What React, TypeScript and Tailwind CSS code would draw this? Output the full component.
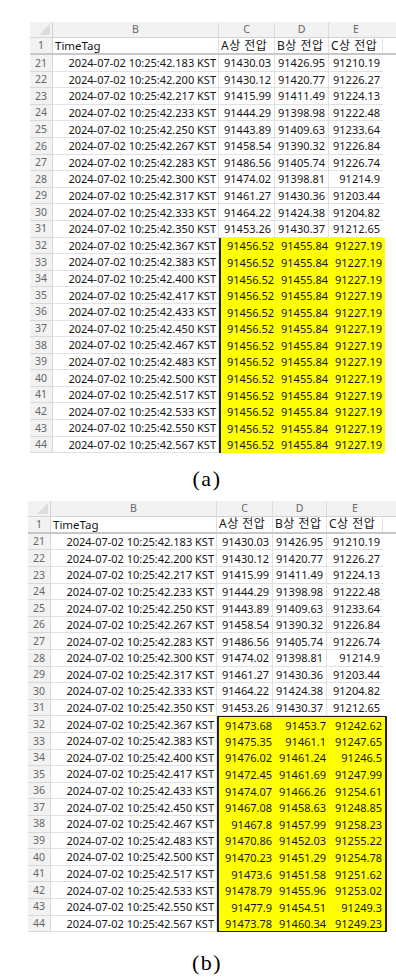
import React from "react";

type Row = { n: number; t: string; a: string; b: string; c: string; hl?: boolean };

const ms = [
  "183", "200", "217", "233", "250", "267", "283", "300", "317", "333", "350", "367",
  "383", "400", "417", "433", "450", "467", "483", "500", "517", "533", "550", "567",
];

const common: string[][] = [
  ["91430.03", "91426.95", "91210.19"],
  ["91430.12", "91420.77", "91226.27"],
  ["91415.99", "91411.49", "91224.13"],
  ["91444.29", "91398.98", "91222.48"],
  ["91443.89", "91409.63", "91233.64"],
  ["91458.54", "91390.32", "91226.84"],
  ["91486.56", "91405.74", "91226.74"],
  ["91474.02", "91398.81", "91214.9"],
  ["91461.27", "91430.36", "91203.44"],
  ["91464.22", "91424.38", "91204.82"],
  ["91453.26", "91430.37", "91212.65"],
];

const tailB: string[][] = [
  ["91473.68", "91453.7", "91242.62"],
  ["91475.35", "91461.1", "91247.65"],
  ["91476.02", "91461.24", "91246.5"],
  ["91472.45", "91461.69", "91247.99"],
  ["91474.07", "91466.26", "91254.61"],
  ["91467.08", "91458.63", "91248.85"],
  ["91467.8", "91457.99", "91258.23"],
  ["91470.86", "91452.03", "91255.22"],
  ["91470.23", "91451.29", "91254.78"],
  ["91473.6", "91451.58", "91251.62"],
  ["91478.79", "91455.96", "91253.02"],
  ["91477.9", "91454.51", "91249.3"],
  ["91473.78", "91460.34", "91249.23"],
];

const build = (tail: string[][]): Row[] =>
  ms.map((m, i) => {
    const v = i < 11 ? common[i] : tail[i - 11];
    return { n: 21 + i, t: `2024-07-02 10:25:42.${m} KST`, a: v[0], b: v[1], c: v[2], hl: i >= 11 };
  });

const rowsA = build(Array.from({ length: 13 }, () => ["91456.52", "91455.84", "91227.19"]));
const rowsB = build(tailB);

type Widths = { num: string; b: string; c: string; d: string; e: string };

const wA: Widths = { num: "w-[23px]", b: "w-[166px]", c: "w-[56px]", d: "w-[54px]", e: "w-[54px]" };
const wB: Widths = { num: "w-[23px]", b: "w-[166px]", c: "w-[56px]", d: "w-[54px]", e: "w-[56px]" };

const cell = "h-full border-r border-[#e1e1e1] flex items-center";

function Sheet({ rows, w, boxed }: { rows: Row[]; w: Widths; boxed: boolean }) {
  const last = rows.length - 1;
  return (
    <div className="flex flex-col text-[11px] leading-none text-[#161616] font-['Noto_Sans','Noto_Sans_CJK_KR',sans-serif]">
      {/* column letters */}
      <div className="flex h-[16px] bg-[#f2f2f2] border-b border-[#d4d4d4] text-[#666] text-[10.5px]">
        <div className={`${w.num} h-full border-r border-[#d4d4d4] relative overflow-hidden`}>
          <div className="absolute right-[2px] bottom-[2px] w-0 h-0 border-l-[11px] border-l-transparent border-b-[11px] border-b-[#dcdcdc]" />
        </div>
        <div className={`${w.b} h-full border-r border-[#dedede] flex items-center justify-center`}>B</div>
        <div className={`${w.c} h-full border-r border-[#dedede] flex items-center justify-center`}>C</div>
        <div className={`${w.d} h-full border-r border-[#dedede] flex items-center justify-center`}>D</div>
        <div className={`${w.e} h-full flex items-center justify-center`}>E</div>
      </div>
      {/* header row 1 */}
      <div className="flex h-[17px] border-b-2 border-[#c8c8c8]">
        <div className={`${w.num} h-full bg-[#f2f2f2] border-r border-[#d4d4d4] flex items-center justify-center text-[#666] text-[10.5px]`}>1</div>
        <div className={`${w.b} ${cell} pl-[2px] text-[11.5px]`}>TimeTag</div>
        <div className={`${w.c} ${cell} pl-[2px] text-[12px] tracking-[0.5px] whitespace-nowrap`}>A상 전압</div>
        <div className={`${w.d} ${cell} pl-[2px] text-[12px] tracking-[0.5px] whitespace-nowrap`}>B상 전압</div>
        <div className={`${w.e} ${cell} pl-[2px] text-[12px] tracking-[0.5px] whitespace-nowrap`}>C상 전압</div>
      </div>
      {rows.map((r, i) => {
        const y = r.hl;
        const first = y && !rows[i - 1]?.hl;
        const hlBox = y
          ? `bg-[#ffff00] ${boxed && first ? "border-t-[1.5px] border-t-[#222]" : ""} ${boxed && i === last ? "border-b-[1.5px] border-b-[#222]" : ""}`
          : "border-b border-[#e1e1e1]";
        return (
          <div key={r.n} className="flex h-[16.6px]">
            <div className={`${w.num} h-full bg-[#f2f2f2] border-r border-b border-[#d9d9d9] flex items-center justify-center text-[#666] text-[10.5px]`}>
              {r.n}
            </div>
            <div className={`${w.b} ${cell} border-b justify-end pr-[2px]`}>{r.t}</div>
            <div className={`flex h-full ${y ? "border-l-2 border-l-[#222]" : ""} ${y && boxed ? "border-r-2 border-r-[#222]" : ""} ${hlBox} box-border`}>
              <div className={`${w.c} h-full flex items-center justify-end pr-[3px] ${y ? "" : "border-r border-[#e1e1e1]"}`}>{r.a}</div>
              <div className={`${w.d} h-full flex items-center justify-end pr-[3px] ${y ? "" : "border-r border-[#e1e1e1]"}`}>{r.b}</div>
              <div className={`${w.e} h-full flex items-center justify-end pr-[3px]`}>{r.c}</div>
            </div>
          </div>
        );
      })}
    </div>
  );
}

function Caption({ label }: { label: string }) {
  return (
    <div className="flex justify-center pl-[18px] text-[22px] leading-[22px] text-black font-['Liberation_Serif',serif]">
      <span className="tracking-[1.5px]">({label})</span>
    </div>
  );
}

export default function App() {
  return (
    <div className="w-[396px] h-[980px] bg-white flex flex-col">
      <div className="pt-[22px] pl-[30px]">
        <Sheet rows={rowsA} w={wA} boxed={false} />
      </div>
      <div className="h-[47.6px] pt-[15px]">
        <Caption label="a" />
      </div>
      <div className="pl-[28px]">
        <Sheet rows={rowsB} w={wB} boxed={true} />
      </div>
      <div className="pt-[20px]">
        <Caption label="b" />
      </div>
    </div>
  );
}
